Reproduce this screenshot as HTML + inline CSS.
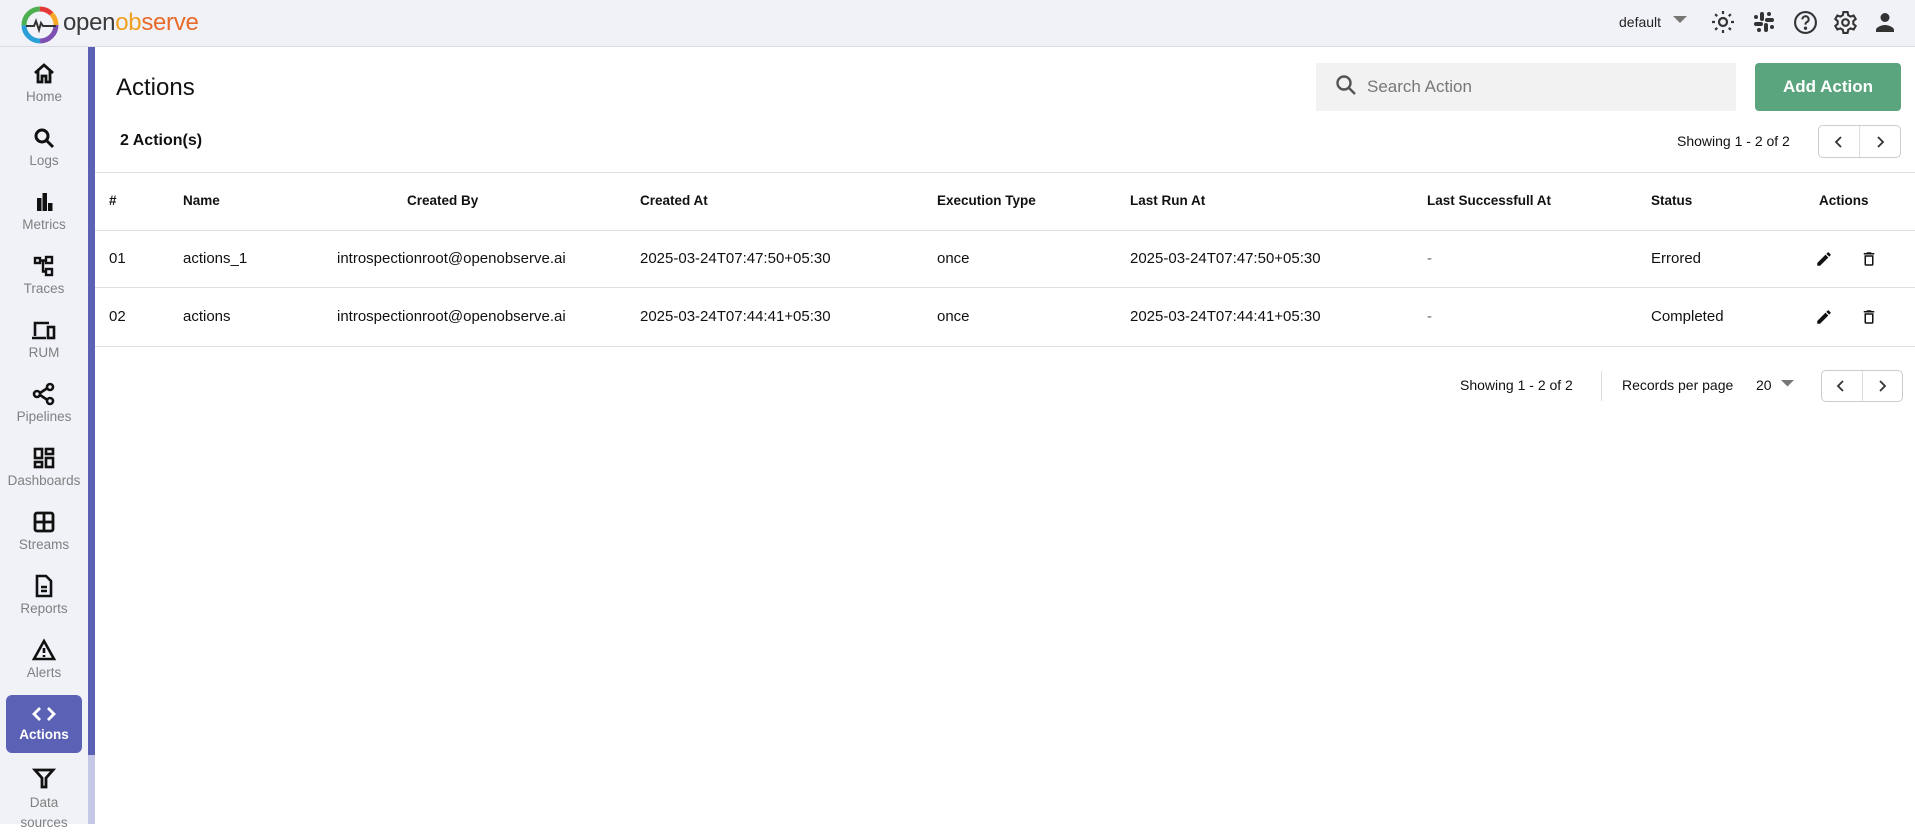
<!DOCTYPE html>
<html><head><meta charset="utf-8"><style>
*{box-sizing:border-box;margin:0;padding:0}
body{width:1915px;height:824px;overflow:hidden;background:#fff;font-family:"Liberation Sans",sans-serif;color:#111;position:relative}
.a{position:absolute}
.hdr{left:0;top:0;width:1915px;height:47px;background:#f1f2f7;border-bottom:1px solid #dcdce2}
.side{left:0;top:47px;width:88px;height:777px;background:#f1f2f7}
.bar{left:88px;top:47px;width:7px;height:708px;background:#5b61b5}
.bar2{left:88px;top:755px;width:7px;height:69px;background:#c5c7e6}
.it{position:absolute;left:0;width:88px;text-align:center;font-size:13.5px;color:#808080}
.it svg{display:block;margin:0 auto}
.it div{margin-top:3px}
.hl{left:0;width:1915px;height:1px;background:#e0e0e0}
.th{font-size:13.5px;font-weight:bold;top:193px}
.td{font-size:15px}
</style></head><body>
<div class="a hdr"></div>
<svg class="a" style="left:21px;top:6px" width="40" height="40" viewBox="0 0 40 40">
<circle cx="19" cy="19" r="16" fill="none" stroke="#7d4fb3" stroke-width="5" stroke-dasharray="25 76" stroke-dashoffset="0"/>
<circle cx="19" cy="19" r="16" fill="none" stroke="#2a9fd8" stroke-width="5" stroke-dasharray="25 76" stroke-dashoffset="-25"/>
<circle cx="19" cy="19" r="16" fill="none" stroke="#4caf50" stroke-width="5" stroke-dasharray="25 76" stroke-dashoffset="-50"/>
<circle cx="19" cy="19" r="16" fill="none" stroke="#e53935" stroke-width="5" stroke-dasharray="13 88" stroke-dashoffset="-75"/>
<circle cx="19" cy="19" r="16" fill="none" stroke="#f9a825" stroke-width="5" stroke-dasharray="13 88" stroke-dashoffset="-88"/>
<path d="M5 20h8l2-5 3 9 2-7 2 3h13" fill="none" stroke="#333" stroke-width="2"/>
</svg>
<div class="a" style="left:63px;top:9px;font-size:24px;letter-spacing:-0.3px"><span style="color:#3a3a3a">open</span><span style="color:#f0a020">ob</span><span style="color:#e86a2a">serve</span></div>
<div class="a" style="left:1619px;top:14px;font-size:14px;color:#222">default</div>
<svg class="a" style="left:1673px;top:16px" width="14" height="8"><path d="M0 0h14L7 7z" fill="#777"/></svg>
<svg class="a" style="left:1711px;top:10px" width="24" height="24" viewBox="0 0 24 24" fill="none" stroke="#333" stroke-width="2.2"><circle cx="12" cy="12" r="4"/><path d="M12 1v3M12 20v3M1 12h3M20 12h3M4.2 4.2l2 2M17.8 17.8l2 2M4.2 19.8l2-2M17.8 6.2l2-2"/></svg>
<svg class="a" style="left:1753px;top:11px" width="22" height="22" viewBox="0 0 22 22" fill="#333"><rect x="7" y="1" width="4" height="9" rx="2"/><rect x="11" y="12" width="4" height="9" rx="2"/><rect x="1" y="11" width="9" height="4" rx="2"/><rect x="12" y="7" width="9" height="4" rx="2"/><circle cx="16" cy="3" r="2"/><circle cx="6" cy="19" r="2"/><circle cx="3" cy="6" r="2"/><circle cx="19" cy="16" r="2"/></svg>
<svg class="a" style="left:1793px;top:10px" width="25" height="25" viewBox="0 0 24 24" fill="none" stroke="#333" stroke-width="2"><circle cx="12" cy="12" r="10"/><path d="M9 9a3 3 0 1 1 4 2.8c-1 .4-1 1.2-1 2.2"/><circle cx="12" cy="17.5" r=".6" fill="#333"/></svg>
<svg class="a" style="left:1833px;top:10px" width="25" height="25" viewBox="0 0 24 24" fill="none" stroke="#333" stroke-width="2"><circle cx="12" cy="12" r="3.2"/><path d="M10 2h4l.6 3 2.3 1.3 2.9-1 2 3.4-2.3 2v2.6l2.3 2-2 3.4-2.9-1-2.3 1.3-.6 3h-4l-.6-3-2.3-1.3-2.9 1-2-3.4 2.3-2v-2.6l-2.3-2 2-3.4 2.9 1L9.4 5z"/></svg>
<svg class="a" style="left:1873px;top:10px" width="24" height="24" viewBox="0 0 24 24" fill="#333"><circle cx="12" cy="7.5" r="4.5"/><path d="M3 22v-2c0-3 6-5 9-5s9 2 9 5v2z"/></svg>

<div class="a side"></div><div class="a bar"></div><div class="a bar2"></div>
<div class="a" style="left:6px;top:695px;width:76px;height:58px;background:#5b61b5;border-radius:6px"></div>

<div class="it" style="top:62px"><svg width="24" height="24" viewBox="0 0 24 24" fill="none" stroke="#111" stroke-width="2.8"><path d="M3 11L12 3l9 8M6 9v11h4v-6h4v6h4V9"/></svg><div>Home</div></div>
<div class="it" style="top:126px"><svg width="24" height="24" viewBox="0 0 24 24" fill="none" stroke="#111" stroke-width="3"><circle cx="10" cy="10" r="6"/><path d="M14.5 14.5L21 21"/></svg><div>Logs</div></div>
<div class="it" style="top:190px"><svg width="24" height="24" viewBox="0 0 24 24" fill="#111"><rect x="5" y="8" width="4.5" height="13"/><rect x="10.5" y="3" width="4.5" height="18"/><rect x="16" y="13" width="4.5" height="8"/></svg><div>Metrics</div></div>
<div class="it" style="top:254px"><svg width="24" height="24" viewBox="0 0 24 24" fill="none" stroke="#111" stroke-width="2.4"><rect x="3" y="4" width="5" height="5"/><rect x="14" y="3" width="6" height="6"/><rect x="14" y="15" width="6" height="6"/><path d="M8 6.5h6M11 6.5v11h3"/></svg><div>Traces</div></div>
<div class="it" style="top:318px"><svg width="26" height="24" viewBox="0 0 26 24" fill="none" stroke="#111" stroke-width="2.6"><path d="M4 18V5h14M1 20h14"/><rect x="17" y="9" width="6" height="11"/></svg><div>RUM</div></div>
<div class="it" style="top:382px"><svg width="24" height="24" viewBox="0 0 24 24" fill="none" stroke="#111" stroke-width="2.6"><circle cx="5" cy="12" r="3"/><circle cx="18" cy="5" r="3"/><circle cx="18" cy="19" r="3"/><path d="M8 11l7.5-5M8 13l7.5 5"/></svg><div>Pipelines</div></div>
<div class="it" style="top:446px"><svg width="24" height="24" viewBox="0 0 24 24" fill="none" stroke="#111" stroke-width="2.6"><rect x="3" y="3" width="7" height="9"/><rect x="14" y="3" width="7" height="5"/><rect x="3" y="16" width="7" height="5"/><rect x="14" y="12" width="7" height="9"/></svg><div>Dashboards</div></div>
<div class="it" style="top:510px"><svg width="24" height="24" viewBox="0 0 24 24" fill="none" stroke="#111" stroke-width="2.8"><rect x="3" y="3" width="18" height="18" rx="2"/><path d="M12 3v18M3 12h18"/></svg><div>Streams</div></div>
<div class="it" style="top:574px"><svg width="24" height="24" viewBox="0 0 24 24" fill="none" stroke="#111" stroke-width="2.6"><path d="M5 2h9l5 5v15H5z"/><path d="M9 13h6M9 17h6"/></svg><div>Reports</div></div>
<div class="it" style="top:638px"><svg width="24" height="24" viewBox="0 0 24 24" fill="none" stroke="#111" stroke-width="2.6"><path d="M12 3L2 21h20z"/><path d="M12 10v5M12 17v2"/></svg><div>Alerts</div></div>
<div class="it" style="top:702px;color:#fff;font-weight:bold"><svg width="24" height="24" viewBox="0 0 24 24" fill="none" stroke="#fff" stroke-width="2.8"><path d="M8 6l-6 6 6 6M16 6l6 6-6 6"/></svg><div style="margin-top:1px">Actions</div></div>
<div class="it" style="top:766px;line-height:20px"><svg width="24" height="24" viewBox="0 0 24 24" fill="none" stroke="#111" stroke-width="2.8"><path d="M3 4h18l-7 8v9h-4v-9z"/></svg><div>Data<br>sources</div></div>

<div class="a" style="left:116px;top:74px;font-size:24px;color:#111">Actions</div>
<div class="a" style="left:1316px;top:63px;width:420px;height:48px;background:#f2f2f2"></div>
<svg class="a" style="left:1334px;top:73px" width="24" height="24" viewBox="0 0 24 24" fill="none" stroke="#555" stroke-width="2.4"><circle cx="10" cy="10" r="6.5"/><path d="M15 15l6 6"/></svg>
<div class="a" style="left:1367px;top:77px;font-size:17px;color:#777">Search Action</div>
<div class="a" style="left:1755px;top:63px;width:146px;height:48px;background:#5ba57e;border-radius:4px;color:#fff;font-size:17px;font-weight:bold;text-align:center;line-height:48px">Add Action</div>

<div class="a" style="left:120px;top:132px;font-size:16px;font-weight:bold">2 Action(s)</div>
<div class="a" style="left:1677px;top:133px;font-size:14px">Showing 1 - 2 of 2</div>
<div class="a" style="left:1818px;top:125px;width:83px;height:33px;border:1px solid #ccc;border-radius:5px"></div>
<div class="a" style="left:1859px;top:126px;width:1px;height:31px;background:#ddd"></div>
<svg class="a" style="left:1834px;top:136px" width="10" height="12"><path d="M7 1L2 6l5 5" fill="none" stroke="#333" stroke-width="1.8"/></svg>
<svg class="a" style="left:1875px;top:136px" width="10" height="12"><path d="M3 1l5 5-5 5" fill="none" stroke="#333" stroke-width="1.8"/></svg>

<div class="a hl" style="left:95px;top:172px;width:1820px"></div>
<div class="a hl" style="left:95px;top:230px;width:1820px"></div>
<div class="a hl" style="left:95px;top:287px;width:1820px"></div>
<div class="a hl" style="left:95px;top:346px;width:1820px"></div>

<div class="a th" style="left:109px">#</div>
<div class="a th" style="left:183px">Name</div>
<div class="a th" style="left:407px">Created By</div>
<div class="a th" style="left:640px">Created At</div>
<div class="a th" style="left:937px">Execution Type</div>
<div class="a th" style="left:1130px">Last Run At</div>
<div class="a th" style="left:1427px">Last Successfull At</div>
<div class="a th" style="left:1651px">Status</div>
<div class="a th" style="left:1819px">Actions</div>

<div class="a td" style="left:109px;top:250px">01</div>
<div class="a td" style="left:183px;top:250px">actions_1</div>
<div class="a td" style="left:337px;top:250px">introspectionroot@openobserve.ai</div>
<div class="a td" style="left:640px;top:250px">2025-03-24T07:47:50+05:30</div>
<div class="a td" style="left:937px;top:250px">once</div>
<div class="a td" style="left:1130px;top:250px">2025-03-24T07:47:50+05:30</div>
<div class="a td" style="left:1427px;top:250px;color:#666">-</div>
<div class="a td" style="left:1651px;top:250px">Errored</div>

<div class="a td" style="left:109px;top:308px">02</div>
<div class="a td" style="left:183px;top:308px">actions</div>
<div class="a td" style="left:337px;top:308px">introspectionroot@openobserve.ai</div>
<div class="a td" style="left:640px;top:308px">2025-03-24T07:44:41+05:30</div>
<div class="a td" style="left:937px;top:308px">once</div>
<div class="a td" style="left:1130px;top:308px">2025-03-24T07:44:41+05:30</div>
<div class="a td" style="left:1427px;top:308px;color:#666">-</div>
<div class="a td" style="left:1651px;top:308px">Completed</div>

<svg class="a" style="left:1815px;top:250px" width="18" height="18" viewBox="0 0 24 24" fill="#111"><path d="M3 17.25V21h3.75L17.8 9.94l-3.75-3.75zM20.7 7.04a1 1 0 0 0 0-1.41l-2.34-2.34a1 1 0 0 0-1.41 0l-1.83 1.83 3.75 3.75z"/></svg>
<svg class="a" style="left:1860px;top:250px" width="18" height="18" viewBox="0 0 24 24" fill="#111"><path d="M6 19a2 2 0 0 0 2 2h8a2 2 0 0 0 2-2V7H6zm2-10h8v10H8zM15.5 4l-1-1h-5l-1 1H5v2h14V4z"/></svg>
<svg class="a" style="left:1815px;top:308px" width="18" height="18" viewBox="0 0 24 24" fill="#111"><path d="M3 17.25V21h3.75L17.8 9.94l-3.75-3.75zM20.7 7.04a1 1 0 0 0 0-1.41l-2.34-2.34a1 1 0 0 0-1.41 0l-1.83 1.83 3.75 3.75z"/></svg>
<svg class="a" style="left:1860px;top:308px" width="18" height="18" viewBox="0 0 24 24" fill="#111"><path d="M6 19a2 2 0 0 0 2 2h8a2 2 0 0 0 2-2V7H6zm2-10h8v10H8zM15.5 4l-1-1h-5l-1 1H5v2h14V4z"/></svg>

<div class="a" style="left:1460px;top:377px;font-size:14px">Showing 1 - 2 of 2</div>
<div class="a" style="left:1601px;top:371px;width:1px;height:30px;background:#ddd"></div>
<div class="a" style="left:1622px;top:377px;font-size:14px">Records per page</div>
<div class="a" style="left:1756px;top:377px;font-size:14px">20</div>
<svg class="a" style="left:1781px;top:380px" width="13" height="7"><path d="M0 0h13L6.5 6.5z" fill="#777"/></svg>
<div class="a" style="left:1821px;top:370px;width:82px;height:32px;border:1px solid #ccc;border-radius:5px"></div>
<div class="a" style="left:1862px;top:371px;width:1px;height:30px;background:#ddd"></div>
<svg class="a" style="left:1836px;top:380px" width="10" height="12"><path d="M7 1L2 6l5 5" fill="none" stroke="#333" stroke-width="1.8"/></svg>
<svg class="a" style="left:1877px;top:380px" width="10" height="12"><path d="M3 1l5 5-5 5" fill="none" stroke="#333" stroke-width="1.8"/></svg>
</body></html>
